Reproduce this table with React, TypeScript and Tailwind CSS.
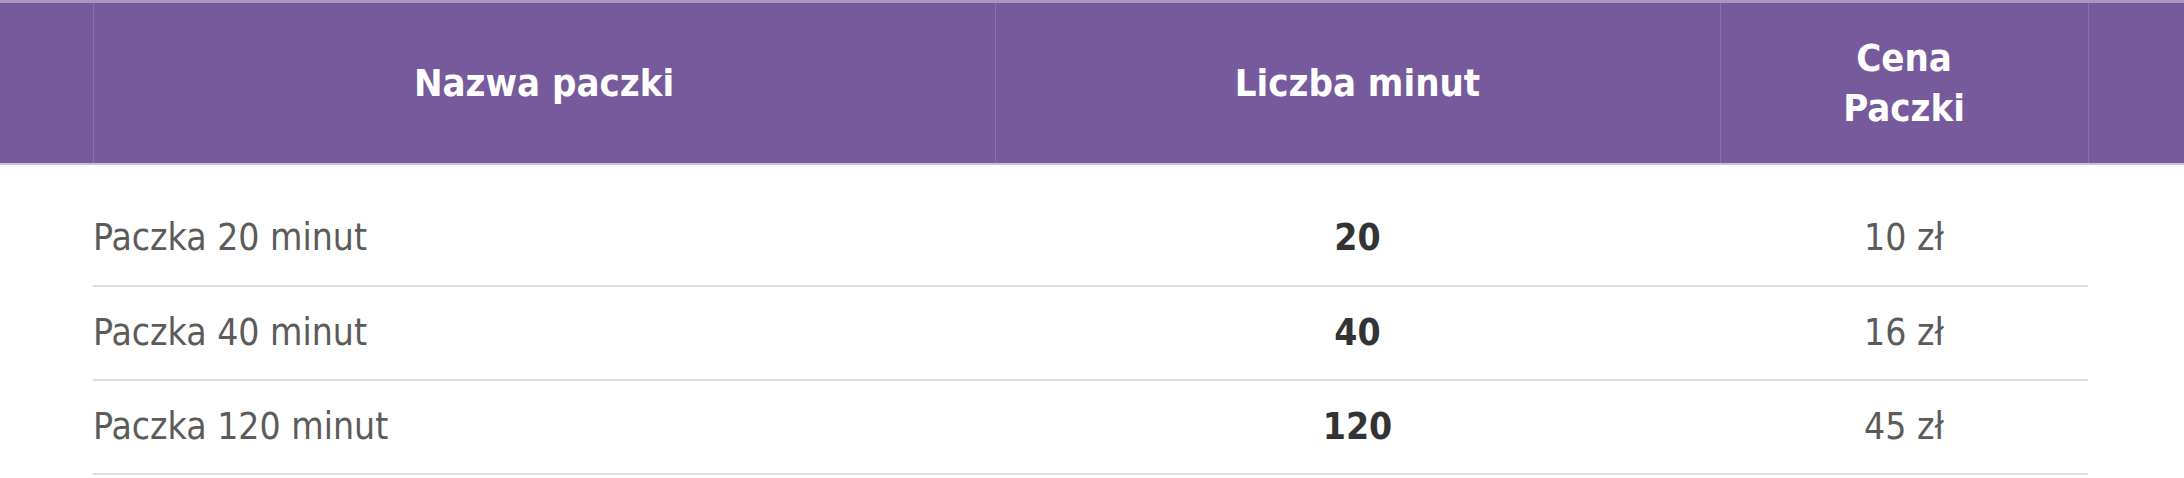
const packages = [
  { name: 'Paczka 20 minut', minutes: 20, price: '10 zł' },
  { name: 'Paczka 40 minut', minutes: 40, price: '16 zł' },
  { name: 'Paczka 120 minut', minutes: 120, price: '45 zł' },
];

export default function App() {
  return (
    <div className="w-[2184px] h-[478px] bg-white font-['DejaVu_Sans_Condensed','DejaVu_Sans',sans-serif] overflow-hidden">
      <table className="w-full border-collapse table-fixed">
        <colgroup>
          <col className="w-[93px]" />
          <col className="w-[902px]" />
          <col className="w-[725px]" />
          <col className="w-[368px]" />
          <col className="w-[96px]" />
        </colgroup>
        <thead>
          <tr className="h-[162px] bg-[#765a9b] text-white text-[38px] font-bold leading-[50px] border-t-[3px] border-t-[#a898c2] border-b-2 border-b-[#cbc0da]">
            <th className="border-r border-[#8a73ab]"></th>
            <th className="border-r border-[#8a73ab] font-bold">Nazwa paczki</th>
            <th className="border-r border-[#8a73ab] font-bold">Liczba minut</th>
            <th className="border-r border-[#8a73ab] font-bold">
              Cena
              <br />
              Paczki
            </th>
            <th></th>
          </tr>
        </thead>
        <tbody className="text-[37px] text-[#5b5b5b]">
          <tr className="h-[28px]">
            <td colSpan={5}></td>
          </tr>
          {packages.map((p) => (
            <tr key={p.name} className="h-[94px]">
              <td></td>
              <td className="border-b-2 border-[#dcdcdc] text-left">{p.name}</td>
              <td className="border-b-2 border-[#dcdcdc] text-center font-bold text-[#333333]">{p.minutes}</td>
              <td className="border-b-2 border-[#dcdcdc] text-center">{p.price}</td>
              <td></td>
            </tr>
          ))}
        </tbody>
      </table>
    </div>
  );
}
